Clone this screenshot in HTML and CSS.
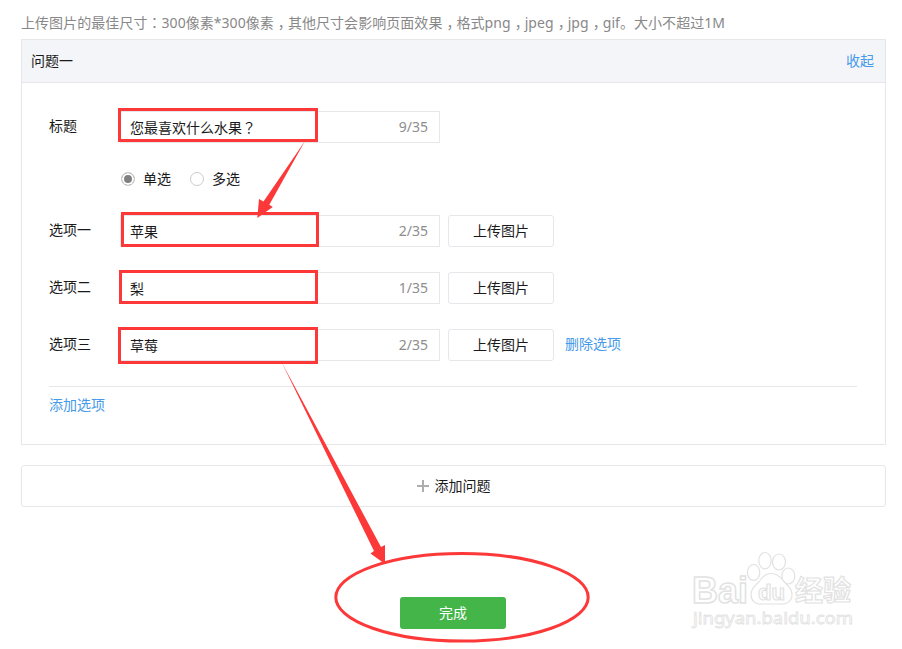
FILE: index.html
```
<!DOCTYPE html>
<html lang="zh-CN">
<head>
    <meta charset="UTF-8">
    <title>问题设置</title>
    <link rel="stylesheet" href="styles.css">
</head>
<body>
    <p class="tip">上传图片的最佳尺寸<span class="mark" lang="zh-TW">：</span>300像素*300像素<span class="comma">，</span>其他尺寸会影响页面效果<span class="comma">，</span>格式png<span class="comma">，</span>jpeg<span class="comma">，</span>jpg<span class="comma">，</span>gif。大小不超过1M</p>
    <div class="card">
        <div class="card-header">
            <span>问题一</span>
            <a class="link">收起</a>
        </div>
        <form class="card-body">
            <div class="row">
                <label class="name">标题</label>
                <div class="field">
                    <span class="value">您最喜欢什么水果<span class="mark" lang="zh-TW">？</span></span>
                    <span class="count">9/35</span>
                </div>
            </div>
            <div class="row types">
                <label class="type"><span class="radio checked"></span>单选</label>
                <label class="type"><span class="radio"></span>多选</label>
            </div>
            <div class="row">
                <label class="name">选项一</label>
                <div class="field">
                    <span class="value">苹果</span>
                    <span class="count">2/35</span>
                </div>
                <button type="button" class="upload">上传图片</button>
            </div>
            <div class="row option">
                <label class="name">选项二</label>
                <div class="field">
                    <span class="value">梨</span>
                    <span class="count">1/35</span>
                </div>
                <button type="button" class="upload">上传图片</button>
            </div>
            <div class="row option">
                <label class="name">选项三</label>
                <div class="field">
                    <span class="value">草莓</span>
                    <span class="count">2/35</span>
                </div>
                <button type="button" class="upload">上传图片</button>
                <a class="link delete">删除选项</a>
            </div>
            <div class="add-option">
                <a class="link">添加选项</a>
            </div>
        </form>
    </div>
    <div class="add-question">
        <svg width="12" height="12" viewBox="0 0 12 12"><path d="M0 6h12M6 0v12" stroke="#adadad" stroke-width="2"/></svg>
        添加问题
    </div>
    <button type="button" class="finish">完成</button>

    <!-- step marks over the form -->
    <svg class="marks" width="902" height="649" viewBox="0 0 902 649">
        <g fill="none" stroke="#fd3838" stroke-width="3">
            <rect x="119.5" y="109.5" width="197" height="31"/>
            <rect x="122.5" y="213.5" width="195" height="32"/>
            <rect x="120.5" y="271.5" width="196" height="31"/>
            <rect x="119.5" y="328.5" width="197" height="34"/>
            <ellipse cx="462" cy="597.3" rx="126.2" ry="43.8"/>
        </g>
        <g fill="#fd3838">
            <path d="M305 141L263.5 201.5 259 199 257.3 218 272.8 207 269.3 204.8z"/>
            <path d="M281.5 362L374 551 370.5 553.5 385 564 385 545 381 547z"/>
        </g>
    </svg>

    <svg class="watermark" width="180" height="90" viewBox="0 0 180 90">
        <g fill="#fff" stroke="#e2e2e2" stroke-width="1.2">
            <text class="wm-bold" x="8" y="58" font-size="37" stroke-width="1.5" textLength="56" lengthAdjust="spacingAndGlyphs">Bai</text>
            <ellipse cx="69.6" cy="27.4" rx="6.2" ry="8"/>
            <ellipse cx="81" cy="15.7" rx="6.2" ry="8.2"/>
            <ellipse cx="95" cy="17" rx="6.5" ry="8"/>
            <ellipse cx="104.3" cy="31" rx="6.5" ry="8"/>
            <path d="M87 28.5c-6 0-9 4-11 7-3 4-9 7-9 14 0 6 4 10 10 9.500h20c6 .5 11-3 11-9.5 0-7-6-10-9-14-3-4-6-7-12-7z"/>
            <text class="wm-bold" x="74" y="54.5" font-size="22" textLength="27" lengthAdjust="spacingAndGlyphs">du</text>
            <text class="wm-cn" x="111" y="56" font-size="28" textLength="56" lengthAdjust="spacingAndGlyphs">经验</text>
            <text class="wm-url" x="9" y="79" font-size="17" stroke-width="0.8" textLength="160" lengthAdjust="spacingAndGlyphs">jingyan.baidu.com</text>
        </g>
    </svg>
</body>
</html>
```
FILE: styles.css
```
* {
    box-sizing: border-box;
}
body {
    margin: 0;
    padding: 13px 16px 0 21px;
    height: 649px;
    overflow: hidden;
    background-color: #fff;
    color: #1a1a1a;
    font-family: "Noto Sans", "Noto Sans CJK SC", sans-serif;
    font-size: 14px;
    line-height: 20px;
}
.tip {
    margin: 0 0 6px;
    color: #888;
    letter-spacing: 0.05px;
    white-space: nowrap;
}
.mark {
    font-family: "Noto Sans CJK TC", sans-serif;
    line-height: 1;
}
.comma {
    padding: 0 3px 0 4px;
    font-feature-settings: "halt";
}
.link {
    color: #459ae9;
}
.card {
    height: 406px;
    border: 1px solid #e7e7eb;
}
.card-header {
    display: flex;
    justify-content: space-between;
    align-items: center;
    height: 43px;
    padding: 0 11px 0 9px;
    border-bottom: 1px solid #e7e7eb;
    background-color: #f4f5f9;
}
.card-body {
    padding: 28px 28px 0 27px;
}
.row {
    display: flex;
    align-items: center;
    height: 32px;
}
.name {
    width: 71px;
    padding-bottom: 2px;
}
.field {
    display: flex;
    justify-content: space-between;
    align-items: center;
    width: 320px;
    height: 32px;
    padding: 0 11px 0 9px;
    border: 1px solid #e7e7eb;
}
.value {
    padding-top: 2px;
}
.count {
    color: #8d8d8d;
}
.types {
    gap: 19px;
    margin: 20px 0;
    padding-left: 72px;
}
.type {
    display: flex;
    align-items: center;
    gap: 8px;
}
.radio {
    width: 14px;
    height: 14px;
    border: 1px solid #ccc;
    border-radius: 50%;
    background-color: #fff;
}
.radio.checked {
    background-color: #808080;
    box-shadow: inset 0 0 0 2px #fff;
}
.option {
    margin-top: 25px;
}
.upload {
    width: 106px;
    height: 32px;
    margin-left: 8px;
    padding: 0;
    border: 1px solid #e7e7eb;
    border-radius: 3px;
    background-color: #fff;
    color: #1a1a1a;
    font: inherit;
}
.delete {
    margin-left: 11px;
    padding-bottom: 2px;
}
.add-option {
    margin-top: 25px;
    padding-top: 8px;
    border-top: 1px solid #e7e7eb;
}
.add-question {
    display: flex;
    justify-content: center;
    align-items: center;
    gap: 6px;
    height: 42px;
    margin-top: 20px;
    border: 1px solid #e7e7eb;
    border-radius: 3px;
}
.finish {
    display: block;
    width: 106px;
    height: 32px;
    margin: 90px 0 0 379px;
    padding: 0;
    border: none;
    border-radius: 3px;
    background-color: #44b549;
    color: #fff;
    font: inherit;
}
.marks {
    position: absolute;
    top: 0;
    left: 0;
    pointer-events: none;
}
.watermark {
    position: absolute;
    top: 545px;
    left: 684px;
    pointer-events: none;
}
.wm-bold {
    font-family: "Liberation Sans", sans-serif;
    font-weight: bold;
}
.wm-cn {
    font-family: "Noto Sans CJK SC", sans-serif;
    font-weight: bold;
}
.wm-url {
    font-family: "Noto Sans", sans-serif;
}
```
